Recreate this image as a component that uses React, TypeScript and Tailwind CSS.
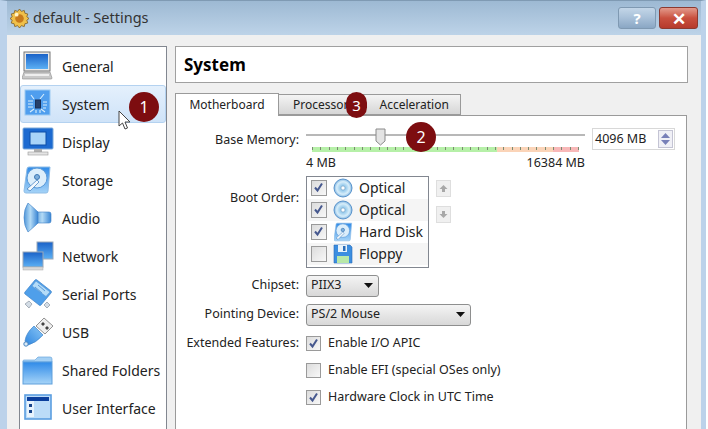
import type { ReactNode } from 'react'

const font = "font-['Noto_Sans',sans-serif]"

function IconDefs() {
  return (
    <svg width="0" height="0" className="absolute">
      <defs>
        <linearGradient id="blue" x1="0" y1="0" x2="0" y2="1">
          <stop offset="0" stopColor="#2f8ae8" />
          <stop offset="1" stopColor="#a6d4f8" />
        </linearGradient>
        <linearGradient id="blueDark" x1="0" y1="0" x2="0" y2="1">
          <stop offset="0" stopColor="#1a62c8" />
          <stop offset="1" stopColor="#5cb0f4" />
        </linearGradient>
        <linearGradient id="blueSide" x1="0" y1="0" x2="1" y2="0">
          <stop offset="0" stopColor="#4e95d8" />
          <stop offset="0.45" stopColor="#b4dbf6" />
          <stop offset="1" stopColor="#3a86d4" />
        </linearGradient>
        <linearGradient id="usb" x1="1" y1="0" x2="0" y2="1">
          <stop offset="0" stopColor="#8cc8f6" />
          <stop offset="1" stopColor="#2f86e0" />
        </linearGradient>
        <radialGradient id="disc">
          <stop offset="0" stopColor="#ffffff" />
          <stop offset="0.25" stopColor="#8fc6ea" />
          <stop offset="0.7" stopColor="#d8eefa" />
          <stop offset="1" stopColor="#7fb4e0" />
        </radialGradient>
      </defs>
    </svg>
  )
}

const icons: Record<string, ReactNode> = {
  General: (
    <>
      <rect x="2" y="1" width="26" height="19" fill="#e8e8e8" stroke="#777" />
      <rect x="4" y="3" width="22" height="15" fill="url(#blueDark)" />
      <path d="M2 21h26l2 6a1 1 0 0 1-1 1H1a1 1 0 0 1-1-1z" fill="#c9c9c9" stroke="#888" strokeWidth="0.6" />
      <rect x="3" y="23" width="24" height="2" fill="#eeeeee" />
    </>
  ),
  System: (
    <>
      <rect x="3" y="1" width="25" height="25" fill="#4f9eee" stroke="#9ccaf2" />
      <path d="M9 6l3 4M22 5l-4 5M6 12h5M6 15h5M6 18h5M21 13h4M21 16h4M21 19h3M8 23l4-3M14 24v-3M18 24v-3M23 23l-4-3" stroke="#d8eefc" strokeWidth="1.1" fill="none" />
      <rect x="13.5" y="11" width="5" height="8" fill="#26406a" stroke="#1a3058" />
    </>
  ),
  Display: (
    <>
      <rect x="1" y="1" width="30" height="21" rx="1" fill="#1c6ad0" stroke="#7aa8d8" />
      <rect x="8" y="5" width="16" height="13" fill="#a8d4f8" stroke="#0c4ea8" strokeWidth="1" />
      <rect x="12" y="22" width="8" height="3" fill="#b0b0b0" />
      <rect x="6" y="25" width="20" height="3" fill="#e4e4e4" stroke="#999" strokeWidth="0.6" />
    </>
  ),
  Storage: (
    <>
      <path d="M5 4q0-2 2-2h21l-2 24q0 2-2 2H4q-2 0-2-2z" fill="url(#blue)" stroke="#8fbde6" />
      <ellipse cx="15" cy="13" rx="10" ry="10" fill="#dceefb" stroke="#5b9ad8" />
      <circle cx="15" cy="12" r="2.5" fill="#7fb0dc" stroke="#3e78b4" />
      <path d="M5 24l10-9 2 2-9 9z" fill="#f3f8fc" stroke="#4d88c4" strokeWidth="0.8" />
    </>
  ),
  Audio: (
    <>
      <path d="M13 9h14q2 0 2 2v7q0 2-2 2H13z" fill="url(#blueSide)" stroke="#3c80c6" strokeWidth="0.6" />
      <path d="M6 0q7 6 10 9v11q-3 3-10 9q-4-6-4-14.500t4-14.500z" fill="url(#blueSide)" stroke="#3c80c6" strokeWidth="0.6" />
    </>
  ),
  Network: (
    <>
      <rect x="15" y="1" width="16" height="17" fill="url(#blueDark)" stroke="#9aa8b8" />
      <rect x="1" y="11" width="20" height="15" fill="url(#blueDark)" stroke="#9aa8b8" />
      <rect x="1" y="26" width="20" height="3" fill="#d8d8d8" stroke="#aaa" strokeWidth="0.5" />
    </>
  ),
  'Serial Ports': (
    <>
      <path d="M3 25l4-3 3 3-3 4zM22 26l3-3 3 3-3 3z" fill="#d4dde6" stroke="#7b8794" strokeWidth="0.6" />
      <path d="M13 1q1-1 2 0l14 11q1 1 0 2L19 26q-1 1-2 0L3 15q-1-1 0-2z" fill="#4f9fea" stroke="#3f84c8" strokeWidth="0.7" />
      <path d="M14 2l14 11-4 4.500L10 7z" fill="#b4dcf8" stroke="#5a9ad8" strokeWidth="0.7" />
      <path d="M16 6l7 6M13 8l7 6" stroke="#5a9ad8" strokeWidth="1" />
    </>
  ),
  USB: (
    <>
      <path d="M3 24q1-8 9-15l9 9q-7 8-15 10z" fill="url(#usb)" stroke="#3f84c8" strokeWidth="0.7" />
      <path d="M14 9l8-8 9 8-8 8z" fill="#efefef" stroke="#777" strokeWidth="0.8" />
      <path d="M21 5l2 2-2 2-2-2zM25 9l2 2-2 2-2-2z" fill="#444" />
      <circle cx="4" cy="27" r="2.2" fill="#dbeaf6" stroke="#4a86c0" />
    </>
  ),
  'Shared Folders': (
    <>
      <path d="M1 6q0-1 1-1h11l3-3h12q2 0 2 2v3H1z" fill="#a4d0f4" stroke="#6aa6dc" strokeWidth="0.7" />
      <rect x="1" y="7" width="29" height="22" fill="url(#blue)" stroke="#5e9fdb" />
    </>
  ),
  'User Interface': (
    <>
      <rect x="3" y="2" width="26" height="24" fill="#bcdcf8" stroke="#5b9ee0" strokeWidth="1.6" />
      <rect x="5" y="4" width="22" height="4" fill="#0c3f9c" />
      <rect x="5" y="8" width="7" height="16" fill="#e8f3fc" />
      <rect x="7" y="11" width="3" height="3" fill="#17438a" />
      <rect x="7" y="17" width="3" height="3" fill="#17438a" />
    </>
  ),
}

function SideItem({ label, active }: { label: string; active?: boolean }) {
  return (
    <div
      className={
        active
          ? 'h-[38px] flex items-center rounded-[3px] border border-[#b4d2f0] bg-gradient-to-b from-[#e4f0fc] to-[#cfe3f8] pl-[1px]'
          : 'h-[38px] flex items-center border border-transparent pl-[1px]'
      }
    >
      <svg width="32" height="30" viewBox="0 0 32 30" className="shrink-0">
        {icons[label]}
      </svg>
      <span className="ml-[8px] text-[14px] text-[#222]">{label}</span>
    </div>
  )
}

function Check({ checked, big }: { checked?: boolean; big?: boolean }) {
  return (
    <span className={`${big ? 'h-[16px] w-[16px]' : 'h-[15px] w-[15px]'} relative block shrink-0 border border-[#9a9a9a] bg-gradient-to-br from-[#dcdcdc] to-[#f8f8f8]`}>
      {checked && (
        <svg viewBox="0 0 13 13" className="absolute inset-0 h-[13px] w-[13px]">
          <path d="M3 6.5l2.500 3L10 2.500" fill="none" stroke="#46588e" strokeWidth="2" />
        </svg>
      )}
    </span>
  )
}

function Disc() {
  return (
    <svg width="20" height="20" viewBox="0 0 20 20">
      <circle cx="10" cy="10" r="9" fill="url(#disc)" stroke="#5a94cc" />
      <circle cx="10" cy="10" r="2" fill="#fff" stroke="#7aa0c0" strokeWidth="0.6" />
    </svg>
  )
}

function BootRow({ label, checked, odd, icon }: { label: string; checked?: boolean; odd?: boolean; icon: ReactNode }) {
  return (
    <div className={odd ? 'h-[22px] flex items-center bg-[#f5f5f5] pl-[4px]' : 'h-[22px] flex items-center pl-[4px]'}>
      <Check checked={checked} big />
      <span className="ml-[6px] flex h-[20px] w-[20px] items-center justify-center">{icon}</span>
      <span className="ml-[6px] text-[14px] text-[#222]">{label}</span>
    </div>
  )
}

function Combo({ label, width }: { label: string; width: string }) {
  return (
    <div className={`${width} flex h-[22px] items-center justify-between rounded-[3px] border border-[#8e8f8f] bg-gradient-to-b from-[#f4f4f4] to-[#d8d8d8] pl-[4px] pr-[5px] text-[12.5px] text-[#222]`}>
      <span>{label}</span>
      <svg width="9" height="5" viewBox="0 0 9 5">
        <path d="M0 0h9L4.500 5z" fill="#111" />
      </svg>
    </div>
  )
}

function Badge({ n, className }: { n: number; className: string }) {
  return (
    <div className={`absolute flex h-[30px] w-[30px] items-center justify-center rounded-full bg-[#7d0d10] text-[16px] text-white ${className}`}>
      {n}
    </div>
  )
}

function FormRow({ label, children, className, labelClass }: { label?: string; children: ReactNode; className?: string; labelClass?: string }) {
  return (
    <div className={`flex ${className ?? 'items-center'}`}>
      <div className={`w-[123px] shrink-0 text-right text-[12.5px] text-[#222] ${labelClass ?? ''}`}>{label}</div>
      <div className="ml-[7px] min-w-0 flex-1">{children}</div>
    </div>
  )
}

function MoveButton({ d }: { d: string }) {
  return (
    <div className="flex h-[17px] w-[15px] items-center justify-center border border-[#dedede] bg-[#f0f0f0]">
      <svg width="9" height="9" viewBox="0 0 9 9">
        <path d={d} fill="#a8a8a8" />
      </svg>
    </div>
  )
}

const items = ['General', 'System', 'Display', 'Storage', 'Audio', 'Network', 'Serial Ports', 'USB', 'Shared Folders', 'User Interface']
const ticks = Array.from({ length: 33 }, (_, i) => i)

export default function App() {
  return (
    <div className={`${font} relative h-[429px] w-[708px] overflow-hidden bg-white`}>
      <IconDefs />
      <div className="h-[429px] w-[706px] border-x-[7px] border-r-[5px] border-t border-x-[#bcd2ea] border-t-[#7f9ab3] bg-gradient-to-b from-[#9db9d3] to-[#c3d8ec] to-[40px]">
        {/* title bar */}
        <div className="flex h-[34px] items-center pl-[3px] pr-[3px]">
          <svg width="19" height="19" viewBox="0 0 20 20" className="shrink-0">
            <path d="M10 0l2 2.500 3-1 .7 3 3 .7-1 3L20 10l-2.300 1.800 1 3-3 .7-.7 3-3-1L10 20l-2-2.500-3 1-.7-3-3-.7 1-3L0 10l2.300-1.800-1-3 3-.7.7-3 3 1z" fill="#f0c04a" stroke="#7a5a20" strokeWidth="0.8" />
            <circle cx="10" cy="10" r="4.500" fill="#c87a1c" />
            <circle cx="7" cy="6" r="2" fill="#fff3c8" />
          </svg>
          <span className="ml-[4px] text-[14.5px] text-[#333]">default - Settings</span>
          <div className="ml-auto flex gap-[3px]">
            <div className="flex h-[22px] w-[38px] items-center justify-center rounded-[3px] border border-[#7f99b2] bg-gradient-to-b from-[#c3d6e8] via-[#a8c0d8] to-[#8aa7c4] text-[15px] font-bold text-white">?</div>
            <div className="flex h-[22px] w-[39px] items-center justify-center rounded-[3px] border border-[#8c3a30] bg-gradient-to-b from-[#e29a8c] via-[#c9503f] to-[#b63a2c] text-[17px] font-bold leading-none text-white">✕</div>
          </div>
        </div>

        <div className="flex h-[394px] gap-[8px] bg-[#f0f0f0] pl-[12px] pr-[13px] pt-[11px]">
          {/* sidebar */}
          <div className="h-[400px] w-[148px] shrink-0 border border-[#828790] bg-white">
            {items.map((it) => (
              <SideItem key={it} label={it} active={it === 'System'} />
            ))}
          </div>

          <div className="min-w-0 flex-1">
            <div className="flex h-[37px] items-center border border-[#a0a0a0] bg-white pl-[8px] text-[17px] font-bold text-black">System</div>

            {/* tabs */}
            <div className="mt-[10px] flex h-[22px] items-end">
              <div className="relative z-10 mb-[-1px] flex h-[23px] w-[104px] items-center justify-center border border-b-0 border-[#9a9a9a] bg-white text-[12px] text-[#222]">Motherboard</div>
              <div className="flex h-[21px] w-[182px] items-center border border-l-0 border-[#9a9a9a] bg-gradient-to-b from-[#f4f4f4] to-[#d6d6d6] text-[12px] text-[#222]">
                <span className="ml-[14px]">Processor</span>
                <span className="ml-[31px]">Acceleration</span>
              </div>
            </div>

            <div className="h-[320px] w-[512px] border border-[#9a9a9a] bg-white pt-[12px]">
              {/* base memory */}
              <FormRow label="Base Memory:" className="items-start" labelClass="pt-[3px]">
                <div className="flex">
                  <div className="w-[279px]">
                    <div className="relative h-[19px]">
                      <div className="absolute left-0 right-0 top-[6px] h-[2px] bg-[#b8b8b8]" />
                      <svg width="11" height="18" viewBox="0 0 11 18" className="absolute left-[69px] top-0">
                        <path d="M1 1h9v12l-4.500 4L1 13z" fill="#e4e4e4" stroke="#8a8a8a" />
                      </svg>
                    </div>
                    <div className="ml-[6px] flex h-[5px] w-[267px] items-stretch">
                      <div className="w-[185px] bg-[#b6f0a8]" />
                      <div className="w-[56px] bg-[#fbd4b8]" />
                      <div className="w-[26px] bg-[#f8b8b8]" />
                    </div>
                    <div className="ml-[6px] -mt-[5px] flex h-[5px] w-[267px] justify-between">
                      {ticks.map((t) => (
                        <span key={t} className="h-[3px] w-px bg-[#7a8a70]" />
                      ))}
                    </div>
                    <div className="mt-[2px] flex justify-between text-[12.5px] text-[#222]">
                      <span>4 MB</span>
                      <span>16384 MB</span>
                    </div>
                  </div>
                  <div className="ml-[7px] flex h-[22px] w-[83px] items-center justify-between border border-[#d8d8d8] bg-white pl-[2px] pr-[1px] text-[12.5px] text-[#222]">
                    <span>4096 MB</span>
                    <div className="flex h-[18px] w-[15px] flex-col border border-[#c4c4d4] bg-[#f0f0f6]">
                      <svg viewBox="0 0 13 8" className="h-[8px] w-[13px]"><path d="M2 7h9L6.500 2z" fill="#7880b8" /></svg>
                      <svg viewBox="0 0 13 8" className="h-[8px] w-[13px]"><path d="M2 1h9L6.500 6z" fill="#7880b8" /></svg>
                    </div>
                  </div>
                </div>
              </FormRow>

              {/* boot order */}
              <FormRow label="Boot Order:" className="mt-[3px] items-start" labelClass="pt-[13px]">
                <div className="flex items-start">
                  <div className="h-[92px] w-[123px] border border-[#828790] bg-white">
                    <BootRow label="Optical" checked icon={<Disc />} />
                    <BootRow label="Optical" checked odd icon={<Disc />} />
                    <BootRow
                      label="Hard Disk"
                      checked
                      icon={
                        <svg width="19" height="20" viewBox="2 1 28 28">
                          {icons.Storage}
                        </svg>
                      }
                    />
                    <BootRow
                      label="Floppy"
                      odd
                      icon={
                        <svg width="20" height="20" viewBox="0 0 20 20">
                          <path d="M1 1h16l2 2v16H1z" fill="#3c8ee0" stroke="#2a6cb8" strokeWidth="0.6" />
                          <rect x="5" y="1" width="9" height="7" fill="#e8f2fa" />
                          <rect x="10" y="2" width="2.500" height="5" fill="#2a6cb8" />
                          <rect x="4" y="12" width="12" height="7" fill="#b8e8a8" />
                        </svg>
                      }
                    />
                  </div>
                  <div className="ml-[7px] mt-[4px] flex flex-col gap-[9px]">
                    <MoveButton d="M4.500 1L8.500 5H6v3H3V5H.5z" />
                    <MoveButton d="M4.500 8L8.500 4H6V1H3v3H.5z" />
                  </div>
                </div>
              </FormRow>

              <FormRow label="Chipset:" className="mt-[7px] items-center">
                <Combo label="PIIX3" width="w-[73px]" />
              </FormRow>
              <FormRow label="Pointing Device:" className="mt-[7px] items-center">
                <Combo label="PS/2 Mouse" width="w-[165px]" />
              </FormRow>

              {[
                { label: 'Extended Features:', text: 'Enable I/O APIC', on: true },
                { text: 'Enable EFI (special OSes only)', on: false },
                { text: 'Hardware Clock in UTC Time', on: true },
              ].map((row) => (
                <FormRow key={row.text} label={row.label} className="mt-[9px] h-[18px] items-center">
                  <div className="flex items-center">
                    <Check checked={row.on} />
                    <span className="ml-[7px] text-[12.5px] text-[#222]">{row.text}</span>
                  </div>
                </FormRow>
              ))}
            </div>
          </div>
        </div>
      </div>

      {/* annotations drawn on top of the screenshot */}
      <Badge n={1} className="left-[129px] top-[92px]" />
      <Badge n={2} className="left-[406px] top-[122px]" />
      <div className="absolute left-[346px] top-[92px] flex h-[26px] w-[21px] items-center justify-center rounded-full bg-[#7d0d10] text-[15px] text-white">3</div>
      <svg width="13" height="20" viewBox="0 0 13 20" className="absolute left-[118px] top-[110px]">
        <path d="M1 1v15l3.500-3 2.500 6 2.500-1-2.500-6H12z" fill="#fff" stroke="#444" />
      </svg>
    </div>
  )
}
